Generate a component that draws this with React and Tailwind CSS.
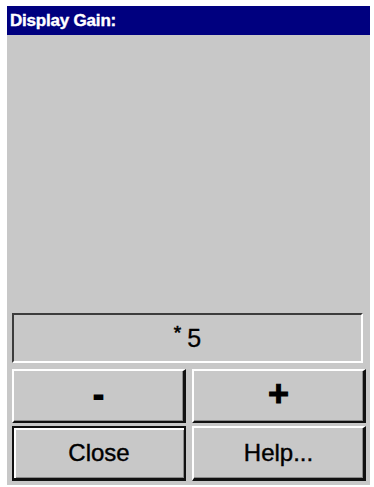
import React from "react";

const font = { fontFamily: '"Liberation Sans", Arial, sans-serif' };

export default function App() {
  return (
    <div className="w-[374px] h-[487px] bg-white pt-[6px] pl-[7px]" style={font}>
      <div className="w-[363px] h-[479px] bg-[#c8c8c8] flex flex-col">
        <div className="h-[29px] bg-[#00007f] flex items-center pl-[3px]">
          <span className="text-white font-bold text-[17px] leading-none tracking-[-0.2px] [-webkit-text-stroke:0.4px_white]">Display Gain:</span>
        </div>
        <div className="flex-1 flex flex-col justify-end pl-[5px] pr-[4px] pb-[4px]">
          <div className="h-[50px] mr-[3px] border-t-2 border-l-2 border-[#3c3c3c] border-b-2 border-r-2 border-b-white border-r-white flex items-center justify-center text-[25px] text-black leading-none">
            <span className="text-[19px] relative top-[-6px] [-webkit-text-stroke:0.6px_black]">*</span>
            <span className="ml-[6px] [-webkit-text-stroke:0.3px_black]">5</span>
          </div>
          <div className="grid grid-cols-2 gap-x-[6px] mt-[6px]">
            <button className="h-[54px] border-t-2 border-l-2 border-white border-b-2 border-r-[3px] border-b-[#111] border-r-[#111] shadow-[inset_-1px_-1px_0_#8a8a8a] bg-[#c8c8c8] flex items-center justify-center font-bold text-[30px] text-black leading-none">
              <span className="relative top-[-1px] [-webkit-text-stroke:2px_black]">-</span>
            </button>
            <button className="h-[54px] border-t-2 border-l-2 border-white border-b-2 border-r-[3px] border-b-[#111] border-r-[#111] shadow-[inset_-1px_-1px_0_#8a8a8a] bg-[#c8c8c8] flex items-center justify-center font-bold text-[36px] text-black leading-none">
              <span className="relative top-[-2px] [-webkit-text-stroke:1px_black]">+</span>
            </button>
          </div>
          <div className="grid grid-cols-2 gap-x-[6px] mt-[3px]">
            <button className="h-[55px] border-2 border-[#111] border-b-[3px] bg-[#c8c8c8] shadow-[inset_2px_2px_0_#ffffff,inset_-1px_-1px_0_#8a8a8a] flex items-center justify-center text-[24px] text-black leading-none [-webkit-text-stroke:0.4px_black]">
              Close
            </button>
            <button className="h-[55px] border-t-2 border-l-2 border-white border-b-[3px] border-r-[3px] border-b-[#111] border-r-[#111] shadow-[inset_-1px_-1px_0_#8a8a8a] bg-[#c8c8c8] flex items-center justify-center text-[24px] text-black leading-none [-webkit-text-stroke:0.4px_black]">
              Help...
            </button>
          </div>
        </div>
      </div>
    </div>
  );
}
